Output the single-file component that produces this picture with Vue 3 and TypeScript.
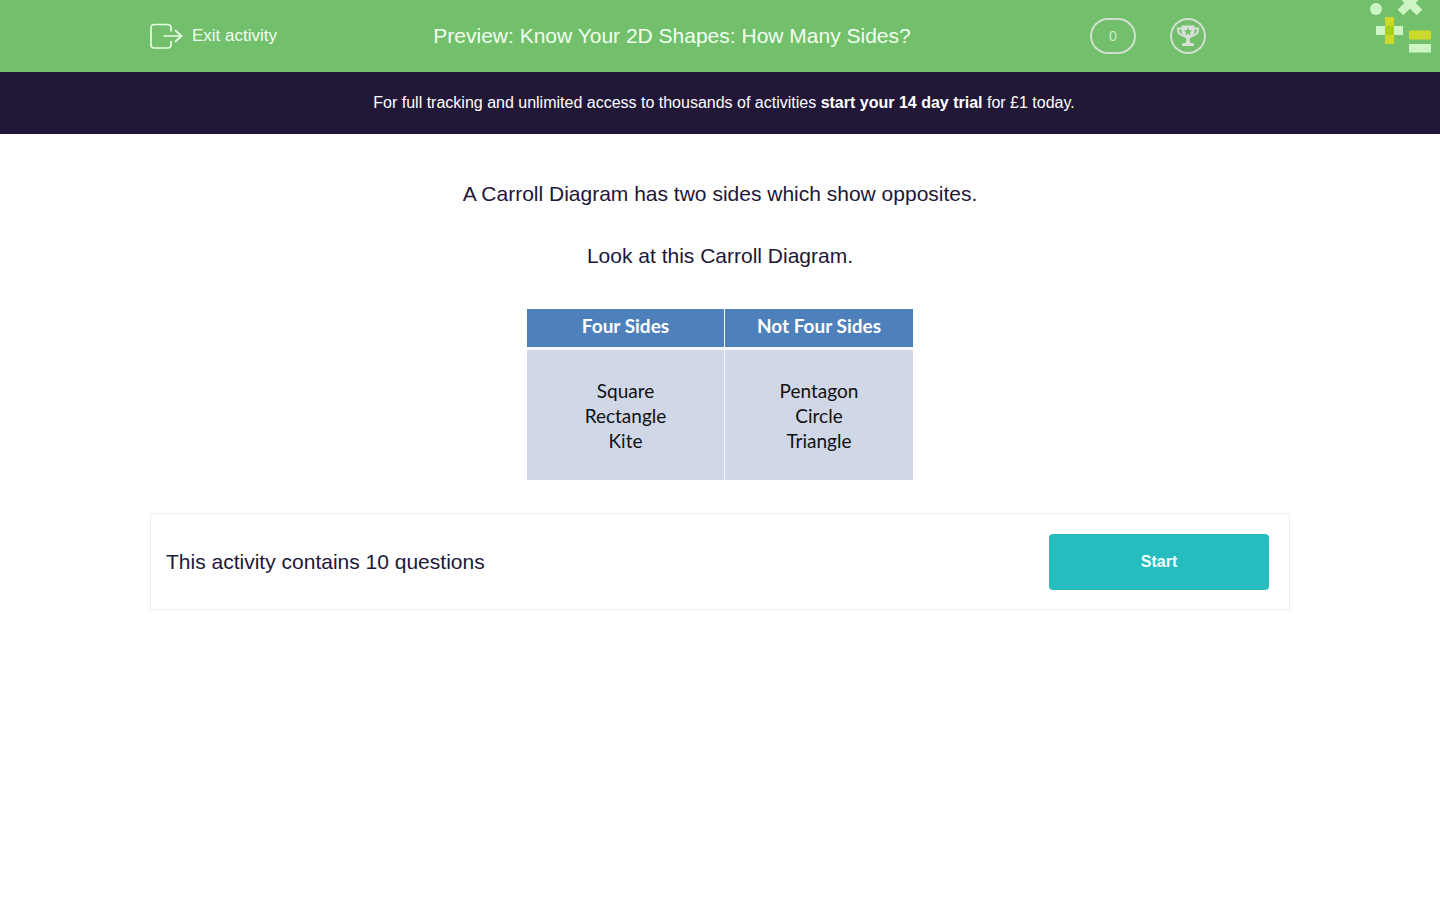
<script setup lang="ts">
interface Column {
  heading: string
  shapes: string[]
}

const columns: Column[] = [
  { heading: 'Four Sides', shapes: ['Square', 'Rectangle', 'Kite'] },
  { heading: 'Not Four Sides', shapes: ['Pentagon', 'Circle', 'Triangle'] },
]
const score = 0
const questionCount = 10
</script>

<template>
  <div class="page">
    <header class="topbar">
      <div class="container bar">
        <a class="exit" href="#">
          <svg class="exit-icon" viewBox="0 0 34 26" aria-hidden="true">
            <path d="M21 8V5Q21 1.500 17.500 1.500H4.500Q1 1.500 1 5V21.500Q1 25 4.500 25H17.500Q21 25 21 21.500V18.500M14 13H31.500M25.500 7.500L31.500 13L25.500 18.500" />
          </svg>
          <span>Exit activity</span>
        </a>
        <h1>Preview: Know Your 2D Shapes: How Many Sides?</h1>
        <div class="badges">
          <span class="score">{{ score }}</span>
          <span class="trophy">
            <svg viewBox="2 2 32 32" role="img" aria-label="Trophy">
              <path class="handles" d="M12.500 10.500H8Q7.500 17 14.500 18M23.500 10.500H28Q28.500 17 21.500 18" />
              <path class="cup" d="M11.500 7.500H24.500V12Q24.500 18.500 19.700 20.500V24Q20 25 24 25.500V28H12V25.500Q16 25 16.300 24V20.500Q11.500 18.500 11.500 12Z" />
              <path class="star" d="M18 9.200L19.200 12.200L22.200 12.300L19.900 14.300L20.600 17.300L18 15.700L15.400 17.300L16.100 14.300L13.800 12.300L16.800 12.200Z" />
            </svg>
          </span>
        </div>
      </div>
      <svg class="decoration" viewBox="0 0 72 72" aria-hidden="true">
        <g fill="#cdf4c3">
          <circle cx="8" cy="9" r="6" />
          <path d="M8 26H35V35H8ZM41 44H63V52.500H41Z" />
        </g>
        <path fill="none" stroke="#cdf4c3" stroke-width="8" d="M32.500 12.500L51 -6M51.500 12.500L33 -6" />
        <path fill="#cad92b" d="M17 17H26V44H17ZM41 30.500H63V39.500H41Z" />
        <path fill="#a9d01c" d="M17 26H26V35H17Z" />
      </svg>
    </header>

    <p class="promo">
      For full tracking and unlimited access to thousands of activities
      <a href="#">start your 14 day trial</a> for £1 today.
    </p>

    <main class="container">
      <section class="intro">
        <p>A Carroll Diagram has two sides which show opposites.</p>
        <p>Look at this Carroll Diagram.</p>
      </section>

      <table>
        <thead>
          <tr>
            <th v-for="column in columns" :key="column.heading" scope="col">{{ column.heading }}</th>
          </tr>
        </thead>
        <tbody>
          <tr>
            <td v-for="column in columns" :key="column.heading">
              <div v-for="shape in column.shapes" :key="shape">{{ shape }}</div>
            </td>
          </tr>
        </tbody>
      </table>

      <section class="start-panel">
        <p>This activity contains {{ questionCount }} questions</p>
        <button type="button">Start</button>
      </section>
    </main>
  </div>
</template>

<style>
body {
  margin: 0;
  background: #fff;
}
</style>

<style scoped>
.page {
  color: #211737;
  font-family: "Liberation Sans", Arial, sans-serif;
  font-size: 21px;
  line-height: 30px;
}
h1,
p {
  margin: 0;
  font-size: inherit;
  font-weight: 400;
}
.container {
  max-width: 1140px;
  margin: 0 auto;
}
.topbar {
  position: relative;
  background: #72c06c;
  color: #f2fff0;
}
.bar {
  display: grid;
  grid-template-columns: 190px 1fr 286px;
  align-items: center;
  min-height: 72px;
}
.exit {
  display: flex;
  align-items: center;
  gap: 8px;
  color: inherit;
  font-size: 17px;
  text-decoration: none;
}
.exit-icon {
  width: 34px;
  height: 26px;
  fill: none;
  stroke: #e9fbe5;
  stroke-width: 1.7;
  stroke-linecap: round;
  stroke-linejoin: round;
}
h1 {
  text-align: center;
}
.badges {
  display: flex;
  justify-content: flex-end;
  gap: 34px;
  padding-right: 84px;
}
.score,
.trophy {
  box-sizing: border-box;
  height: 36px;
  border: 2px solid #d2dfd0;
  border-radius: 18px;
}
.score {
  width: 46px;
  color: #d2e8ce;
  font-size: 14px;
  line-height: 32px;
  text-align: center;
}
.trophy {
  width: 36px;
}
.trophy svg {
  display: block;
  width: 32px;
  height: 32px;
}
.handles {
  fill: none;
  stroke: #d8e0d7;
  stroke-width: 2;
}
.cup {
  fill: #d8e0d7;
}
.star {
  fill: #72c06c;
}
.decoration {
  position: absolute;
  top: 0;
  right: 0;
  width: 72px;
  height: 72px;
}
.promo {
  padding: 16px 8px 16px 16px;
  background: #211737;
  color: #fff;
  font-size: 16px;
  text-align: center;
}
.promo a {
  color: inherit;
  font-weight: 700;
  text-decoration: none;
}
.intro {
  display: flex;
  flex-direction: column;
  align-items: center;
  gap: 32px;
  padding-top: 45px;
}
table {
  width: 386px;
  margin: 38px auto 33px;
  border-collapse: collapse;
  background: #d0d7e7;
  color: #111;
  font-family: Lato, sans-serif;
  font-size: 19px;
  line-height: 25px;
  text-align: center;
}
th {
  padding: 4px 0 9px;
  border-bottom: 3px solid #f4f7fc;
  background: #4e81bc;
  color: #fff;
  font-weight: 700;
}
td {
  padding: 28px 0 27px;
}
th:first-child,
td:first-child {
  width: 197px;
  border-right: 1px solid #f4f7fc;
}
.start-panel {
  display: flex;
  align-items: center;
  justify-content: space-between;
  padding: 20px 20px 19px 15px;
  border: 1px solid #eee;
  border-radius: 2px;
}
button {
  width: 220px;
  height: 56px;
  border: 0;
  border-radius: 4px;
  background: #25bdbe;
  color: #f4ffff;
  font: 700 16px "Liberation Sans", Arial, sans-serif;
  cursor: pointer;
}
</style>
